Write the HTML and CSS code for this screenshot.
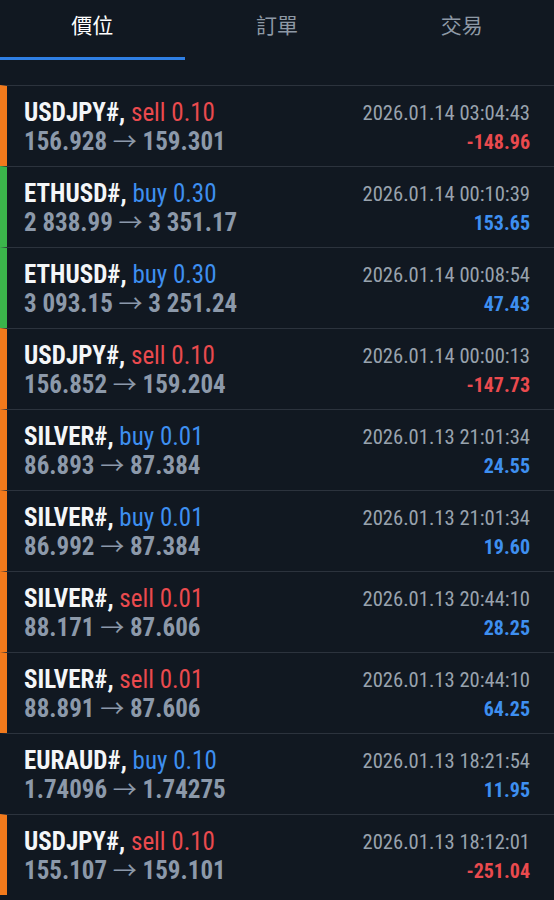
FILE: index.html
```html
<!DOCTYPE html>
<html lang="zh-Hant">
<head>
  <meta charset="UTF-8">
  <meta name="viewport" content="width=device-width, initial-scale=1.0">
  <title>歷史</title>
  <link rel="stylesheet" href="styles.css">
</head>
<body>
  <!-- 分頁 -->
  <div class="tabs">
    <div class="tab active">價位</div>
    <div class="tab">訂單</div>
    <div class="tab">交易</div>
  </div>
  <div class="spacer"></div>

  <!-- 成交列表 -->
  <div class="list">
    <div class="row bar-orange">
      <div class="left">
        <div class="title">USDJPY#, <span class="sell">sell 0.10</span></div>
        <div class="price">156.928 <span class="arrow">→</span> 159.301</div>
      </div>
      <div class="right">
        <div class="date">2026.01.14 03:04:43</div>
        <div class="profit loss">-148.96</div>
      </div>
    </div>
    <div class="row bar-green">
      <div class="left">
        <div class="title">ETHUSD#, <span class="buy">buy 0.30</span></div>
        <div class="price">2 838.99 <span class="arrow">→</span> 3 351.17</div>
      </div>
      <div class="right">
        <div class="date">2026.01.14 00:10:39</div>
        <div class="profit">153.65</div>
      </div>
    </div>
    <div class="row bar-green">
      <div class="left">
        <div class="title">ETHUSD#, <span class="buy">buy 0.30</span></div>
        <div class="price">3 093.15 <span class="arrow">→</span> 3 251.24</div>
      </div>
      <div class="right">
        <div class="date">2026.01.14 00:08:54</div>
        <div class="profit">47.43</div>
      </div>
    </div>
    <div class="row bar-orange">
      <div class="left">
        <div class="title">USDJPY#, <span class="sell">sell 0.10</span></div>
        <div class="price">156.852 <span class="arrow">→</span> 159.204</div>
      </div>
      <div class="right">
        <div class="date">2026.01.14 00:00:13</div>
        <div class="profit loss">-147.73</div>
      </div>
    </div>
    <div class="row bar-orange">
      <div class="left">
        <div class="title">SILVER#, <span class="buy">buy 0.01</span></div>
        <div class="price">86.893 <span class="arrow">→</span> 87.384</div>
      </div>
      <div class="right">
        <div class="date">2026.01.13 21:01:34</div>
        <div class="profit">24.55</div>
      </div>
    </div>
    <div class="row bar-orange">
      <div class="left">
        <div class="title">SILVER#, <span class="buy">buy 0.01</span></div>
        <div class="price">86.992 <span class="arrow">→</span> 87.384</div>
      </div>
      <div class="right">
        <div class="date">2026.01.13 21:01:34</div>
        <div class="profit">19.60</div>
      </div>
    </div>
    <div class="row bar-orange">
      <div class="left">
        <div class="title">SILVER#, <span class="sell">sell 0.01</span></div>
        <div class="price">88.171 <span class="arrow">→</span> 87.606</div>
      </div>
      <div class="right">
        <div class="date">2026.01.13 20:44:10</div>
        <div class="profit">28.25</div>
      </div>
    </div>
    <div class="row bar-orange">
      <div class="left">
        <div class="title">SILVER#, <span class="sell">sell 0.01</span></div>
        <div class="price">88.891 <span class="arrow">→</span> 87.606</div>
      </div>
      <div class="right">
        <div class="date">2026.01.13 20:44:10</div>
        <div class="profit">64.25</div>
      </div>
    </div>
    <div class="row">
      <div class="left">
        <div class="title">EURAUD#, <span class="buy">buy 0.10</span></div>
        <div class="price">1.74096 <span class="arrow">→</span> 1.74275</div>
      </div>
      <div class="right">
        <div class="date">2026.01.13 18:21:54</div>
        <div class="profit">11.95</div>
      </div>
    </div>
    <div class="row bar-orange">
      <div class="left">
        <div class="title">USDJPY#, <span class="sell">sell 0.10</span></div>
        <div class="price">155.107 <span class="arrow">→</span> 159.101</div>
      </div>
      <div class="right">
        <div class="date">2026.01.13 18:12:01</div>
        <div class="profit loss">-251.04</div>
      </div>
    </div>
  </div>
</body>
</html>
```
FILE: styles.css
```css
* {
  margin: 0;
  padding: 0;
  box-sizing: border-box;
}
body {
  background-color: #111821;
  font-family: "Roboto Condensed", Roboto, sans-serif;
  overflow: hidden;
}

/* 分頁 */
.tabs {
  display: flex;
  height: 60px;
}
.tab {
  flex: 1;
  text-align: center;
  font-family: "Noto Sans CJK TC", sans-serif;
  font-size: 21px;
  line-height: 48px;
  color: #8e99a5;
  border-bottom: 3px solid transparent;
}
.tab.active {
  color: #ffffff;
  border-bottom-color: #2f7fe4;
}
.spacer {
  height: 25px;
}

/* 列表 */
.row {
  display: flex;
  justify-content: space-between;
  height: 81px;
  border-top: 1px solid #2c333d;
  border-left: 7px solid transparent;
  padding: 12px 24px 0 17px;
}
.row.bar-orange {
  border-left-color: #f27a1c;
}
.row.bar-green {
  border-left-color: #3bb44b;
}
.left, .right {
  white-space: nowrap;
}
.right {
  text-align: right;
}
.title {
  font-size: 25px;
  line-height: 29px;
  font-weight: bold;
  color: #f4f6f8;
}
.title span {
  font-weight: normal;
}
.sell {
  color: #ea4a4e;
}
.buy {
  color: #3e8ff0;
}
.price {
  font-size: 25px;
  line-height: 29px;
  font-weight: bold;
  color: #8c99aa;
}
.arrow {
  font-family: "Noto Sans CJK TC", sans-serif;
  font-weight: normal;
  font-size: 24px;
  line-height: 1;
}
.date {
  font-size: 20.6px;
  line-height: 29px;
  color: #99a3ae;
  padding-top: 1px;
}
.profit {
  font-size: 20px;
  line-height: 28px;
  font-weight: bold;
  color: #3e8ff0;
}
.profit.loss {
  color: #ea4a4e;
}
```
